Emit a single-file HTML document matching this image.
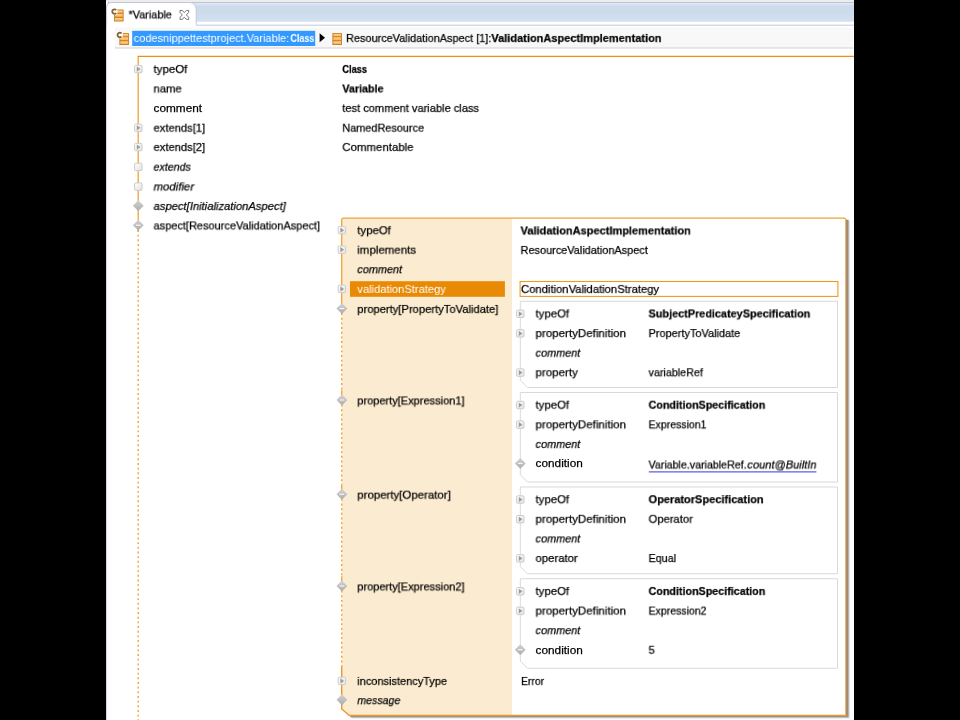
<!DOCTYPE html>
<html>
<head>
<meta charset="utf-8">
<title>Variable</title>
<style>
html,body{margin:0;padding:0;background:#000;}
body{width:960px;height:720px;position:relative;overflow:hidden;font-family:"Liberation Sans",sans-serif;}
#page{position:absolute;left:106px;top:0;width:748px;height:720px;background:#fff;overflow:hidden;}
#gfx{position:absolute;left:0;top:0;}
.t{position:absolute;white-space:pre;font-family:"Liberation Sans",sans-serif;font-size:11.75px;line-height:16px;height:16px;transform-origin:0 0;will-change:transform;-webkit-text-stroke:0.25px currentColor;}
</style>
</head>
<body>
<div id="page"></div>
<svg id="gfx" width="960" height="720" viewBox="0 0 960 720">
<defs>
<linearGradient id="tabg" x1="0" y1="0" x2="0" y2="1">
<stop offset="0" stop-color="#e6eefa"/><stop offset="0.18" stop-color="#cedbeb"/><stop offset="0.55" stop-color="#cddbeb"/><stop offset="1" stop-color="#d3e1f0"/>
</linearGradient>
<linearGradient id="og" x1="0" y1="0" x2="0" y2="1">
<stop offset="0" stop-color="#ffd596"/><stop offset="1" stop-color="#f9b24e"/>
</linearGradient>
<linearGradient id="ig" x1="0" y1="0" x2="1" y2="1">
<stop offset="0" stop-color="#ffffff"/><stop offset="1" stop-color="#e2e2e2"/>
</linearGradient>
<linearGradient id="dg" x1="0" y1="0" x2="0" y2="1">
<stop offset="0" stop-color="#d2d2d2"/><stop offset="1" stop-color="#adadad"/>
</linearGradient>
</defs>
<rect x="106" y="0" width="748" height="2.2" fill="#ededed"/>
<rect x="107" y="2.6" width="747" height="19.1" fill="url(#tabg)"/>
<path d="M108,2.5 H854" stroke="#bcc3d6" stroke-width="1" fill="none"/>
<path d="M196,25.2 H854" stroke="#c2c8da" stroke-width="1" fill="none"/>
<path d="M106.6,5 V720" stroke="#ccd3e4" stroke-width="1" fill="none"/>
<path d="M106.6,26 V7 Q106.8,2.6 111.5,2.5 H190 Q195.6,3 196.2,9 V25.4" fill="#fff" stroke="#c2c8da" stroke-width="1"/>
<rect x="107.2" y="24" width="88.4" height="3" fill="#fff"/>
<path d="M180,10.4 H182 L184.3,12.5 L186.6,10.4 H188.7 V12.4 L186.4,14.9 L188.7,17.4 V19.4 H186.6 L184.3,17.3 L182,19.4 H180 V17.4 L182.3,14.9 L180,12.4 Z" fill="#fff" stroke="#757575" stroke-width="1" stroke-linejoin="round"/>
<rect x="115" y="27.6" width="738" height="20" fill="#f8f8f8"/>
<rect x="115" y="47.2" width="738" height="1.5" fill="#dedede"/>
<rect x="132.2" y="30.8" width="183" height="15.2" fill="#3399ff"/>
<path d="M319.6,33.2 L325,37.7 L319.6,42.2 Z" fill="#000"/>
<g transform="translate(111.6,9.0)"><rect x="2.5" y="0.6" width="9.5" height="11.9" rx="0.5" fill="#c67a1f"/>
<rect x="3.4" y="1.4" width="7.7" height="2.5" fill="url(#og)"/>
<rect x="3.4" y="4.9" width="7.7" height="2.9" fill="url(#og)"/>
<rect x="3.4" y="8.9" width="7.7" height="2.8" fill="url(#og)"/></g>
<rect x="110.8" y="7.8" width="6.6" height="7.2" fill="#fff" rx="2"/>
<path d="M116.19999999999999,10.0 A2.3,2.3 0 1 0 116.19999999999999,13.2" fill="none" stroke="#866033" stroke-width="1.8"/>
<g transform="translate(116.9,32.4)"><rect x="2.5" y="0.6" width="9.5" height="11.9" rx="0.5" fill="#c67a1f"/>
<rect x="3.4" y="1.4" width="7.7" height="2.5" fill="url(#og)"/>
<rect x="3.4" y="4.9" width="7.7" height="2.9" fill="url(#og)"/>
<rect x="3.4" y="8.9" width="7.7" height="2.8" fill="url(#og)"/></g>
<rect x="116.10000000000001" y="31.2" width="6.6" height="7.2" fill="#fff" rx="2"/>
<path d="M121.5,33.4 A2.3,2.3 0 1 0 121.5,36.6" fill="none" stroke="#866033" stroke-width="1.8"/>
<g transform="translate(329.9,32.4)"><rect x="2.5" y="0.6" width="9.5" height="11.9" rx="0.5" fill="#c67a1f"/>
<rect x="3.4" y="1.4" width="7.7" height="2.5" fill="url(#og)"/>
<rect x="3.4" y="4.9" width="7.7" height="2.9" fill="url(#og)"/>
<rect x="3.4" y="8.9" width="7.7" height="2.8" fill="url(#og)"/></g>
<path d="M138.2,231.5 V56.4" fill="none" stroke="#f0a336" stroke-width="1.3"/>
<path d="M137.6,56.4 H854" fill="none" stroke="#ec9010" stroke-width="1.3"/>
<path d="M138.2,230.0 V720" fill="none" stroke="#f0a336" stroke-width="1.45" stroke-dasharray="1.9 2.76"/>
<path d="M341.7,218.2 H512 V715.3 H349.4 L341.7,709 Z" fill="#fbebd0"/>
<rect x="512" y="218.2" width="334" height="497" fill="#fff"/>
<path d="M849.3,221 V717.8 M352,718 H849.8" fill="none" stroke="#e2e2e2" stroke-width="1.2"/>
<path d="M847.8,219.8 V717.2 M350.5,716.7 H848.6" fill="none" stroke="#8c8f95" stroke-width="1.7"/>
<path d="M341.7,312 V219.8 Q341.8,218.2 343.3,218.2 H844 Q845.6,218.3 845.7,219.8" fill="none" stroke="#f0a336" stroke-width="1.3"/>
<path d="M845.45,219.8 V715" fill="none" stroke="#f5c484" stroke-width="1"/>
<path d="M846.35,219.6 V715.6" fill="none" stroke="#b67c2e" stroke-width="1.1"/>
<path d="M846.6,715.5 H349.4 L341.7,709 V667" fill="none" stroke="#e8982f" stroke-width="1.4"/>
<path d="M341.7,313.10 V390.30" fill="none" stroke="#f0a336" stroke-width="1.45" stroke-dasharray="1.9 2.76"/>
<path d="M341.7,390.30 V396.00" fill="none" stroke="#f0a336" stroke-width="1.3"/>
<path d="M341.7,404.60 V484.55" fill="none" stroke="#f0a336" stroke-width="1.45" stroke-dasharray="1.9 2.76"/>
<path d="M341.7,484.55 V490.25" fill="none" stroke="#f0a336" stroke-width="1.3"/>
<path d="M341.7,498.85 V576.30" fill="none" stroke="#f0a336" stroke-width="1.45" stroke-dasharray="1.9 2.76"/>
<path d="M341.7,576.30 V582.00" fill="none" stroke="#f0a336" stroke-width="1.3"/>
<path d="M341.7,590.60 V667.00" fill="none" stroke="#f0a336" stroke-width="1.45" stroke-dasharray="1.9 2.76"/>
<rect x="350" y="281.2" width="154.9" height="15.6" fill="#e98a05"/>
<rect x="520.1" y="281.5" width="317.8" height="14.9" fill="#fff" stroke="#ee9a22" stroke-width="1.1"/>
<path d="M520.3,301.25 H837.5 V387.5 H527.5 L520.3,380.3 Z" fill="#fff" stroke="#d9d9d9" stroke-width="1"/>
<path d="M520.3,392.5 H837.5 V482 H527.5 L520.3,474.8 Z" fill="#fff" stroke="#d9d9d9" stroke-width="1"/>
<path d="M520.3,487 H837.5 V573.75 H527.5 L520.3,566.55 Z" fill="#fff" stroke="#d9d9d9" stroke-width="1"/>
<path d="M520.3,578.75 H837.5 V668.25 H527.5 L520.3,661.05 Z" fill="#fff" stroke="#d9d9d9" stroke-width="1"/>
<path d="M648.8,471.9 H816.4" stroke="#5c5ce8" stroke-width="1.2" fill="none"/>
<g transform="translate(138.3,69.10)"><rect x="-3.7" y="-3.7" width="7.4" height="7.4" rx="1" fill="url(#ig)" stroke="#cccccc" stroke-width="1"/>
<path d="M-1.5,-2.6 L2.1,0 L-1.5,2.6 Z" fill="#9a9a9a"/></g>
<g transform="translate(138.3,127.85)"><rect x="-3.7" y="-3.7" width="7.4" height="7.4" rx="1" fill="url(#ig)" stroke="#cccccc" stroke-width="1"/>
<path d="M-1.5,-2.6 L2.1,0 L-1.5,2.6 Z" fill="#9a9a9a"/></g>
<g transform="translate(138.3,147.10)"><rect x="-3.7" y="-3.7" width="7.4" height="7.4" rx="1" fill="url(#ig)" stroke="#cccccc" stroke-width="1"/>
<path d="M-1.5,-2.6 L2.1,0 L-1.5,2.6 Z" fill="#9a9a9a"/></g>
<g transform="translate(138.3,166.85)"><rect x="-3.7" y="-3.7" width="7.4" height="7.4" rx="1" fill="url(#ig)" stroke="#cccccc" stroke-width="1"/></g>
<g transform="translate(138.3,186.60)"><rect x="-3.7" y="-3.7" width="7.4" height="7.4" rx="1" fill="url(#ig)" stroke="#cccccc" stroke-width="1"/></g>
<g transform="translate(138.3,205.70)"><path d="M0,-5.4 L5.4,0 L0,5.4 L-5.4,0 Z" fill="url(#dg)"/></g>
<g transform="translate(138.3,225.20)"><path d="M0,-5.4 L5.4,0 L0,5.4 L-5.4,0 Z" fill="url(#dg)"/>
<rect x="-2.4" y="-0.6" width="4.8" height="1.2" fill="#f6f6f6"/></g>
<g transform="translate(341.9,230.15)"><rect x="-3.7" y="-3.7" width="7.4" height="7.4" rx="1" fill="url(#ig)" stroke="#cccccc" stroke-width="1"/>
<path d="M-1.5,-2.6 L2.1,0 L-1.5,2.6 Z" fill="#9a9a9a"/></g>
<g transform="translate(341.9,249.65)"><rect x="-3.7" y="-3.7" width="7.4" height="7.4" rx="1" fill="url(#ig)" stroke="#cccccc" stroke-width="1"/>
<path d="M-1.5,-2.6 L2.1,0 L-1.5,2.6 Z" fill="#9a9a9a"/></g>
<g transform="translate(341.9,288.90)"><rect x="-3.7" y="-3.7" width="7.4" height="7.4" rx="1" fill="url(#ig)" stroke="#cccccc" stroke-width="1"/>
<path d="M-1.5,-2.6 L2.1,0 L-1.5,2.6 Z" fill="#9a9a9a"/></g>
<g transform="translate(341.9,308.50)"><path d="M0,-5.4 L5.4,0 L0,5.4 L-5.4,0 Z" fill="url(#dg)"/>
<rect x="-2.4" y="-0.6" width="4.8" height="1.2" fill="#f6f6f6"/></g>
<g transform="translate(341.9,400.00)"><path d="M0,-5.4 L5.4,0 L0,5.4 L-5.4,0 Z" fill="url(#dg)"/>
<rect x="-2.4" y="-0.6" width="4.8" height="1.2" fill="#f6f6f6"/></g>
<g transform="translate(341.9,494.25)"><path d="M0,-5.4 L5.4,0 L0,5.4 L-5.4,0 Z" fill="url(#dg)"/>
<rect x="-2.4" y="-0.6" width="4.8" height="1.2" fill="#f6f6f6"/></g>
<g transform="translate(341.9,586.00)"><path d="M0,-5.4 L5.4,0 L0,5.4 L-5.4,0 Z" fill="url(#dg)"/>
<rect x="-2.4" y="-0.6" width="4.8" height="1.2" fill="#f6f6f6"/></g>
<g transform="translate(341.9,680.90)"><rect x="-3.7" y="-3.7" width="7.4" height="7.4" rx="1" fill="url(#ig)" stroke="#cccccc" stroke-width="1"/>
<path d="M-1.5,-2.6 L2.1,0 L-1.5,2.6 Z" fill="#9a9a9a"/></g>
<g transform="translate(341.9,699.75)"><path d="M0,-5.4 L5.4,0 L0,5.4 L-5.4,0 Z" fill="url(#dg)"/></g>
<g transform="translate(520.3,313.80)"><rect x="-3.7" y="-3.7" width="7.4" height="7.4" rx="1" fill="url(#ig)" stroke="#cccccc" stroke-width="1"/>
<path d="M-1.5,-2.6 L2.1,0 L-1.5,2.6 Z" fill="#9a9a9a"/></g>
<g transform="translate(520.3,333.40)"><rect x="-3.7" y="-3.7" width="7.4" height="7.4" rx="1" fill="url(#ig)" stroke="#cccccc" stroke-width="1"/>
<path d="M-1.5,-2.6 L2.1,0 L-1.5,2.6 Z" fill="#9a9a9a"/></g>
<g transform="translate(520.3,372.60)"><rect x="-3.7" y="-3.7" width="7.4" height="7.4" rx="1" fill="url(#ig)" stroke="#cccccc" stroke-width="1"/>
<path d="M-1.5,-2.6 L2.1,0 L-1.5,2.6 Z" fill="#9a9a9a"/></g>
<g transform="translate(520.3,405.05)"><rect x="-3.7" y="-3.7" width="7.4" height="7.4" rx="1" fill="url(#ig)" stroke="#cccccc" stroke-width="1"/>
<path d="M-1.5,-2.6 L2.1,0 L-1.5,2.6 Z" fill="#9a9a9a"/></g>
<g transform="translate(520.3,424.65)"><rect x="-3.7" y="-3.7" width="7.4" height="7.4" rx="1" fill="url(#ig)" stroke="#cccccc" stroke-width="1"/>
<path d="M-1.5,-2.6 L2.1,0 L-1.5,2.6 Z" fill="#9a9a9a"/></g>
<g transform="translate(520.3,463.45)"><path d="M0,-5.4 L5.4,0 L0,5.4 L-5.4,0 Z" fill="url(#dg)"/>
<rect x="-2.4" y="-0.6" width="4.8" height="1.2" fill="#f6f6f6"/></g>
<g transform="translate(520.3,499.55)"><rect x="-3.7" y="-3.7" width="7.4" height="7.4" rx="1" fill="url(#ig)" stroke="#cccccc" stroke-width="1"/>
<path d="M-1.5,-2.6 L2.1,0 L-1.5,2.6 Z" fill="#9a9a9a"/></g>
<g transform="translate(520.3,519.15)"><rect x="-3.7" y="-3.7" width="7.4" height="7.4" rx="1" fill="url(#ig)" stroke="#cccccc" stroke-width="1"/>
<path d="M-1.5,-2.6 L2.1,0 L-1.5,2.6 Z" fill="#9a9a9a"/></g>
<g transform="translate(520.3,558.35)"><rect x="-3.7" y="-3.7" width="7.4" height="7.4" rx="1" fill="url(#ig)" stroke="#cccccc" stroke-width="1"/>
<path d="M-1.5,-2.6 L2.1,0 L-1.5,2.6 Z" fill="#9a9a9a"/></g>
<g transform="translate(520.3,591.30)"><rect x="-3.7" y="-3.7" width="7.4" height="7.4" rx="1" fill="url(#ig)" stroke="#cccccc" stroke-width="1"/>
<path d="M-1.5,-2.6 L2.1,0 L-1.5,2.6 Z" fill="#9a9a9a"/></g>
<g transform="translate(520.3,610.90)"><rect x="-3.7" y="-3.7" width="7.4" height="7.4" rx="1" fill="url(#ig)" stroke="#cccccc" stroke-width="1"/>
<path d="M-1.5,-2.6 L2.1,0 L-1.5,2.6 Z" fill="#9a9a9a"/></g>
<g transform="translate(520.3,649.70)"><path d="M0,-5.4 L5.4,0 L0,5.4 L-5.4,0 Z" fill="url(#dg)"/>
<rect x="-2.4" y="-0.6" width="4.8" height="1.2" fill="#f6f6f6"/></g>
</svg>
<span class="t" style="left:128px;top:6px;transform:translate(0.55px,0.43px) scaleX(0.9239);color:#000;">*Variable</span>
<span class="t" style="left:133px;top:29px;transform:translate(0.70px,0.93px) scaleX(0.9354);color:#fff;-webkit-text-stroke:0;">codesnippettestproject.Variable:</span>
<span class="t" style="left:290px;top:29px;transform:translate(0.40px,0.93px) scaleX(0.7653);color:#fff;font-weight:bold;-webkit-text-stroke:0;">Class</span>
<span class="t" style="left:346px;top:29px;transform:translate(0.05px,0.93px) scaleX(0.9278);color:#000;">ResourceValidationAspect [1]:</span>
<span class="t" style="left:491px;top:29px;transform:translate(0.30px,0.93px) scaleX(0.9379);color:#000;font-weight:bold;">ValidationAspectImplementation</span>
<span class="t" style="left:153px;top:60px;transform:translate(0.55px,0.93px) scaleX(0.9747);color:#000;">typeOf</span>
<span class="t" style="left:153px;top:80px;transform:translate(0.55px,0.43px) scaleX(0.9607);color:#000;">name</span>
<span class="t" style="left:153px;top:99px;transform:translate(0.55px,0.93px) scaleX(1.0036);color:#000;">comment</span>
<span class="t" style="left:153px;top:119px;transform:translate(0.55px,0.68px) scaleX(0.9499);color:#000;">extends[1]</span>
<span class="t" style="left:153px;top:138px;transform:translate(0.55px,0.93px) scaleX(0.9499);color:#000;">extends[2]</span>
<span class="t" style="left:153px;top:158px;transform:translate(0.55px,0.68px) scaleX(0.9051);color:#000;font-style:italic;">extends</span>
<span class="t" style="left:153px;top:178px;transform:translate(0.55px,0.43px) scaleX(0.9690);color:#000;font-style:italic;">modifier</span>
<span class="t" style="left:153px;top:197px;transform:translate(0.55px,0.93px) scaleX(0.9551);color:#000;font-style:italic;">aspect[InitializationAspect]</span>
<span class="t" style="left:153px;top:217px;transform:translate(0.55px,0.43px) scaleX(0.9349);color:#000;">aspect[ResourceValidationAspect]</span>
<span class="t" style="left:342px;top:60px;transform:translate(0.30px,0.93px) scaleX(0.7892);color:#000;font-weight:bold;">Class</span>
<span class="t" style="left:342px;top:80px;transform:translate(0.30px,0.43px) scaleX(0.9151);color:#000;font-weight:bold;">Variable</span>
<span class="t" style="left:342px;top:99px;transform:translate(0.30px,0.93px) scaleX(0.9432);color:#000;">test comment variable class</span>
<span class="t" style="left:342px;top:119px;transform:translate(0.30px,0.68px) scaleX(0.9272);color:#000;">NamedResource</span>
<span class="t" style="left:342px;top:138px;transform:translate(0.30px,0.93px) scaleX(0.9739);color:#000;">Commentable</span>
<span class="t" style="left:357px;top:222px;transform:translate(0.30px,0.18px) scaleX(0.9675);color:#000;">typeOf</span>
<span class="t" style="left:357px;top:241px;transform:translate(0.30px,0.68px) scaleX(0.9779);color:#000;">implements</span>
<span class="t" style="left:357px;top:261px;transform:translate(0.30px,0.18px) scaleX(0.9260);color:#000;font-style:italic;">comment</span>
<span class="t" style="left:357px;top:280px;transform:translate(0.30px,0.93px) scaleX(0.9475);color:#fff;-webkit-text-stroke:0;">validationStrategy</span>
<span class="t" style="left:357px;top:300px;transform:translate(0.30px,0.93px) scaleX(0.9524);color:#000;">property[PropertyToValidate]</span>
<span class="t" style="left:357px;top:392px;transform:translate(0.30px,0.43px) scaleX(0.9383);color:#000;">property[Expression1]</span>
<span class="t" style="left:357px;top:486px;transform:translate(0.30px,0.68px) scaleX(0.9738);color:#000;">property[Operator]</span>
<span class="t" style="left:357px;top:578px;transform:translate(0.30px,0.43px) scaleX(0.9383);color:#000;">property[Expression2]</span>
<span class="t" style="left:357px;top:672px;transform:translate(0.30px,0.93px) scaleX(0.9347);color:#000;">inconsistencyType</span>
<span class="t" style="left:357px;top:692px;transform:translate(0.30px,0.18px) scaleX(0.9017);color:#000;font-style:italic;">message</span>
<span class="t" style="left:520px;top:222px;transform:translate(0.55px,0.43px) scaleX(0.9379);color:#000;font-weight:bold;">ValidationAspectImplementation</span>
<span class="t" style="left:520px;top:241px;transform:translate(0.55px,0.93px) scaleX(0.9292);color:#000;">ResourceValidationAspect</span>
<span class="t" style="left:521px;top:280px;transform:translate(0.05px,0.93px) scaleX(0.9574);color:#000;">ConditionValidationStrategy</span>
<span class="t" style="left:521px;top:672px;transform:translate(0.05px,0.93px) scaleX(0.8804);color:#000;">Error</span>
<span class="t" style="left:535px;top:305px;transform:translate(0.55px,0.43px) scaleX(0.9675);color:#000;">typeOf</span>
<span class="t" style="left:648px;top:305px;transform:translate(0.55px,0.43px) scaleX(0.9242);color:#000;font-weight:bold;">SubjectPredicateySpecification</span>
<span class="t" style="left:535px;top:325px;transform:translate(0.55px,0.03px) scaleX(0.9827);color:#000;">propertyDefinition</span>
<span class="t" style="left:648px;top:325px;transform:translate(0.55px,0.03px) scaleX(0.9324);color:#000;">PropertyToValidate</span>
<span class="t" style="left:535px;top:344px;transform:translate(0.55px,0.63px) scaleX(0.9260);color:#000;font-style:italic;">comment</span>
<span class="t" style="left:535px;top:364px;transform:translate(0.55px,0.23px) scaleX(0.9801);color:#000;">property</span>
<span class="t" style="left:648px;top:364px;transform:translate(0.55px,0.23px) scaleX(0.9127);color:#000;">variableRef</span>
<span class="t" style="left:535px;top:396px;transform:translate(0.55px,0.68px) scaleX(0.9675);color:#000;">typeOf</span>
<span class="t" style="left:648px;top:396px;transform:translate(0.55px,0.68px) scaleX(0.9124);color:#000;font-weight:bold;">ConditionSpecification</span>
<span class="t" style="left:535px;top:416px;transform:translate(0.55px,0.28px) scaleX(0.9827);color:#000;">propertyDefinition</span>
<span class="t" style="left:648px;top:416px;transform:translate(0.55px,0.28px) scaleX(0.8968);color:#000;">Expression1</span>
<span class="t" style="left:535px;top:435px;transform:translate(0.55px,0.88px) scaleX(0.9260);color:#000;font-style:italic;">comment</span>
<span class="t" style="left:535px;top:455px;transform:translate(0.55px,0.48px) scaleX(1.0043);color:#000;">condition</span>
<span class="t" style="left:648px;top:456px;transform:translate(0.55px,0.48px) scaleX(0.9057);color:#000;">Variable.variableRef.</span>
<span class="t" style="left:747px;top:456px;transform:translate(0.30px,0.48px) scaleX(0.9442);color:#000;font-style:italic;">count@BuiltIn</span>
<span class="t" style="left:535px;top:491px;transform:translate(0.55px,0.18px) scaleX(0.9675);color:#000;">typeOf</span>
<span class="t" style="left:648px;top:491px;transform:translate(0.55px,0.18px) scaleX(0.9369);color:#000;font-weight:bold;">OperatorSpecification</span>
<span class="t" style="left:535px;top:510px;transform:translate(0.55px,0.78px) scaleX(0.9827);color:#000;">propertyDefinition</span>
<span class="t" style="left:648px;top:510px;transform:translate(0.55px,0.78px) scaleX(0.9542);color:#000;">Operator</span>
<span class="t" style="left:535px;top:530px;transform:translate(0.55px,0.38px) scaleX(0.9260);color:#000;font-style:italic;">comment</span>
<span class="t" style="left:535px;top:549px;transform:translate(0.55px,0.98px) scaleX(0.9654);color:#000;">operator</span>
<span class="t" style="left:648px;top:549px;transform:translate(0.55px,0.98px) scaleX(0.9148);color:#000;">Equal</span>
<span class="t" style="left:535px;top:582px;transform:translate(0.55px,0.93px) scaleX(0.9675);color:#000;">typeOf</span>
<span class="t" style="left:648px;top:582px;transform:translate(0.55px,0.93px) scaleX(0.9124);color:#000;font-weight:bold;">ConditionSpecification</span>
<span class="t" style="left:535px;top:602px;transform:translate(0.55px,0.53px) scaleX(0.9827);color:#000;">propertyDefinition</span>
<span class="t" style="left:648px;top:602px;transform:translate(0.55px,0.53px) scaleX(0.8968);color:#000;">Expression2</span>
<span class="t" style="left:535px;top:622px;transform:translate(0.55px,0.13px) scaleX(0.9260);color:#000;font-style:italic;">comment</span>
<span class="t" style="left:535px;top:641px;transform:translate(0.55px,0.73px) scaleX(1.0043);color:#000;">condition</span>
<span class="t" style="left:648px;top:641px;transform:translate(0.55px,0.73px) scaleX(0.9547);color:#000;">5</span>
</body>
</html>
